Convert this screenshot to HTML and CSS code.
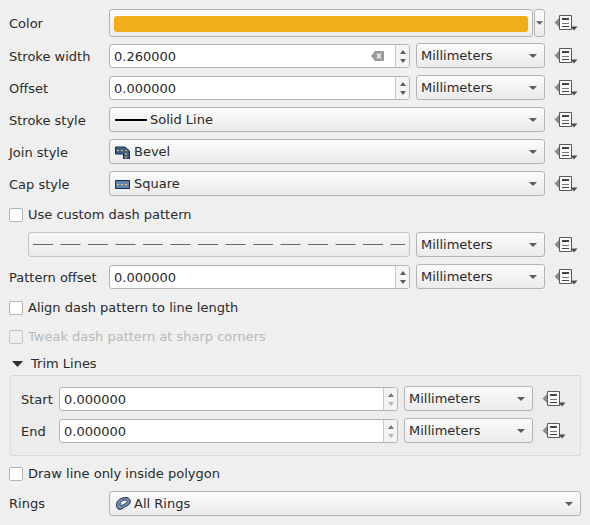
FILE: index.html
```html
<!DOCTYPE html>
<html lang="en">
<head>
<meta charset="utf-8">
<title>Line symbol settings</title>
<link rel="stylesheet" href="styles.css">
</head>
<body>
<svg class="defs" aria-hidden="true">
  <symbol id="dd" viewBox="0 0 24 16">
    <path d="M0.5 7.5 L5.5 2.5 V12.5 Z" fill="#8a8a8a"/>
    <path d="M5.5 0.5 H17.5 V14.5 H5.5 Z" fill="#fafafa" stroke="#5a5a5a" stroke-width="1"/>
    <path d="M8 3.5 H15 M8 4.5 H15" stroke="#444" stroke-width="1"/>
    <path d="M8 8.500 H15" stroke="#777" stroke-width="1"/>
    <path d="M8 11.500 H15" stroke="#444" stroke-width="1"/>
    <path d="M16.500 11.500 H23.500 L20 15.500 Z" fill="#4a4a4a"/>
  </symbol>
  <symbol id="arrow" viewBox="0 0 8 4">
    <path d="M0 0 H8 L4 4 Z" fill="#5c5c5c"/>
  </symbol>
</svg>
<main class="panel">
  <div class="row row-color">
    <span class="label">Color</span>
    <div class="color-btn"><div class="swatch"></div></div>
    <div class="color-drop"><svg class="arrow"><use href="#arrow"/></svg></div>
    <svg class="dd"><use href="#dd"/></svg>
  </div>
  <div class="row row-sw">
    <span class="label">Stroke width</span>
    <div class="spin">
      <span class="value">0.260000</span>
      <svg class="clear" viewBox="0 0 13 10"><path d="M0 5 L4 0 H13 V10 H4 Z" fill="#9a9a9a"/><path d="M6 2.5 L10 7.5 M10 2.5 L6 7.5" stroke="#f4f4f4" stroke-width="1.4"/></svg>
      <div class="steps"><i class="up"></i><i class="down"></i></div>
    </div>
    <div class="combo unit"><span class="txt">Millimeters</span><svg class="arrow"><use href="#arrow"/></svg></div>
    <svg class="dd"><use href="#dd"/></svg>
  </div>
  <div class="row row-off">
    <span class="label">Offset</span>
    <div class="spin">
      <span class="value">0.000000</span>
      <div class="steps"><i class="up"></i><i class="down"></i></div>
    </div>
    <div class="combo unit"><span class="txt">Millimeters</span><svg class="arrow"><use href="#arrow"/></svg></div>
    <svg class="dd"><use href="#dd"/></svg>
  </div>
  <div class="row row-style">
    <span class="label">Stroke style</span>
    <div class="combo wide"><span class="solid"></span><span class="txt">Solid Line</span><svg class="arrow"><use href="#arrow"/></svg></div>
    <svg class="dd"><use href="#dd"/></svg>
  </div>
  <div class="row row-style">
    <span class="label">Join style</span>
    <div class="combo wide">
      <svg class="ico" viewBox="0 0 15 14"><path d="M0.5 2 H10 L14.500 6 V14 H8.500 V9 H0.500 Z" fill="#3f5f8f" stroke="#1d2b44"/><path d="M2 5.500 H4 M6 5.500 H8 M10.500 5.500 H12 M11 8 V10 M11 11.500 V13.500" stroke="#e8d24a" stroke-width="1.200"/></svg>
      <span class="txt">Bevel</span><svg class="arrow"><use href="#arrow"/></svg>
    </div>
    <svg class="dd"><use href="#dd"/></svg>
  </div>
  <div class="row row-style">
    <span class="label">Cap style</span>
    <div class="combo wide">
      <svg class="ico" viewBox="0 0 15 14"><path d="M0.500 3.500 H14.500 V11.500 H0.500 Z" fill="#6484b0" stroke="#1d2b44"/><path d="M2 7.500 H4 M6 7.500 H8 M10 7.500 H12" stroke="#e8d24a" stroke-width="1.200"/></svg>
      <span class="txt">Square</span><svg class="arrow"><use href="#arrow"/></svg>
    </div>
    <svg class="dd"><use href="#dd"/></svg>
  </div>
  <label class="check check-dash"><span class="box"></span>Use custom dash pattern</label>
  <div class="row row-dash">
    <div class="dash-btn"><svg class="dash" viewBox="0 0 372 1"><line x1="0" y1="0.500" x2="372" y2="0.500" stroke="#666" stroke-width="1" stroke-dasharray="20 7.500"/></svg></div>
    <div class="combo unit"><span class="txt">Millimeters</span><svg class="arrow"><use href="#arrow"/></svg></div>
    <svg class="dd"><use href="#dd"/></svg>
  </div>
  <div class="row row-pat">
    <span class="label">Pattern offset</span>
    <div class="spin">
      <span class="value">0.000000</span>
      <div class="steps"><i class="up"></i><i class="down"></i></div>
    </div>
    <div class="combo unit"><span class="txt">Millimeters</span><svg class="arrow"><use href="#arrow"/></svg></div>
    <svg class="dd"><use href="#dd"/></svg>
  </div>
  <label class="check check-align"><span class="box"></span>Align dash pattern to line length</label>
  <label class="check check-tweak disabled"><span class="box"></span>Tweak dash pattern at sharp corners</label>
  <div class="trim-head"><svg class="tri" viewBox="0 0 11 6"><path d="M0 0 H11 L5.500 6 Z" fill="#2e2e2e"/></svg><span>Trim Lines</span></div>
  <section class="group">
    <div class="row">
      <span class="glabel">Start</span>
      <div class="spin spin-g">
        <span class="value">0.000000</span>
        <div class="steps steps-dim"><i class="up"></i><i class="down"></i></div>
      </div>
      <div class="combo unit"><span class="txt">Millimeters</span><svg class="arrow"><use href="#arrow"/></svg></div>
      <svg class="dd dd-g"><use href="#dd"/></svg>
    </div>
    <div class="row row-end">
      <span class="glabel">End</span>
      <div class="spin spin-g">
        <span class="value">0.000000</span>
        <div class="steps steps-dim"><i class="up"></i><i class="down"></i></div>
      </div>
      <div class="combo unit"><span class="txt">Millimeters</span><svg class="arrow"><use href="#arrow"/></svg></div>
      <svg class="dd dd-g"><use href="#dd"/></svg>
    </div>
  </section>
  <label class="check check-draw"><span class="box"></span>Draw line only inside polygon</label>
  <div class="row row-rings">
    <span class="label">Rings</span>
    <div class="combo rings">
      <svg class="ico ico-ring" viewBox="0 0 15 14"><path fill-rule="evenodd" d="M0.500 8 C0.500 3 5 0.500 10 0.500 C13 0.500 15 3 14 6 C13 9 9 9 7 11 C5 13.500 0.500 13 0.500 8 Z M4 7.500 C4 9.500 7 8 9.500 6.500 C12 5 11.500 3 9 3 C6.500 3 4 5 4 7.500 Z" fill="#6f8fb5" stroke="#26364f" stroke-width="1"/></svg>
      <span class="txt">All Rings</span><svg class="arrow"><use href="#arrow"/></svg>
    </div>
  </div>
</main>
</body>
</html>
```
FILE: styles.css
```css
* { box-sizing: border-box; }
html, body { margin: 0; padding: 0; }
body {
  width: 590px;
  height: 525px;
  overflow: hidden;
  background: #efefef;
  color: #2a2a2a;
  font-family: "DejaVu Sans", sans-serif;
  font-size: 13px;
  line-height: 16px;
}
.defs { display: none; }
.panel { padding: 9px 0 0 9px; }
.row { display: flex; align-items: flex-end; height: 25px; }
.label { width: 100px; flex: none; white-space: nowrap; line-height: 22px; }
.row-color { height: 28px; }
.row-color .label { margin-bottom: 2px; }
.row-sw { margin-top: 6px; }
.row-off { margin-top: 7px; }
.row-style { margin-top: 7px; }
.row-dash { margin-top: 9px; padding-left: 19px; }
.row-pat { margin-top: 7px; }
.row-rings { margin-top: 9px; }
.row-rings .label { margin-bottom: 1px; }

.color-btn {
  width: 424px; height: 28px; flex: none; padding: 6px 4px 5px 4px;
  border: 1px solid #b4b4b4; border-radius: 3px;
  background: linear-gradient(#fbfbfb, #ececec);
}
.swatch { height: 16px; background: #f1ae1a; border-radius: 3px; }
.color-drop {
  width: 11px; height: 28px; flex: none; margin-left: 1px;
  border: 1px solid #b4b4b4; border-radius: 3px;
  background: linear-gradient(#fbfbfb, #ececec);
  display: flex; align-items: center; justify-content: center;
}
.color-drop .arrow { margin: 0; width: 7px; height: 4px; }

.spin {
  width: 301px; height: 24px; flex: none;
  display: flex; align-items: center;
  background: #fff;
  border: 1px solid #b4b4b4; border-radius: 3px;
  padding-left: 4px;
}
.spin-g { width: 339px; }
.value { flex: 1; padding-top: 2px; }
.clear { width: 13px; height: 10px; margin-right: 11px; flex: none; }
.steps {
  width: 14px; height: 22px; flex: none;
  display: flex; flex-direction: column; align-items: center; justify-content: center; gap: 5px;
  border-left: 1px solid #c8c8c8;
  background: #f4f4f4;
  border-radius: 0 2px 2px 0;
}
.steps i { width: 0; height: 0; border-left: 3.5px solid transparent; border-right: 3.5px solid transparent; }
.up { border-bottom: 4px solid #5c5c5c; }
.down { border-top: 4px solid #5c5c5c; }
.steps-dim .down { border-top-color: #b4b4b4; }
.steps-dim .up { border-bottom-color: #777; }

.combo {
  height: 25px; flex: none;
  display: flex; align-items: center;
  padding: 0 7px 0 4px;
  border: 1px solid #b4b4b4; border-radius: 3px;
  background: linear-gradient(#fbfbfb, #ebebeb);
}
.combo .txt { flex: 1; white-space: nowrap; }
.unit { width: 129px; margin-left: 6px; }
.wide { width: 436px; padding-left: 5px; }
.rings { width: 472px; padding-left: 6px; }
.arrow { width: 8px; height: 4px; flex: none; }
.solid { width: 32px; height: 2px; background: #000; margin-right: 3px; flex: none; }
.ico { width: 15px; height: 14px; margin-right: 4px; flex: none; }
.ico-ring { margin-right: 3px; }

.dd { width: 24px; height: 16px; flex: none; margin: 0 0 4px 9px; }
.row-color .dd { margin-bottom: 6px; }

.check { display: flex; align-items: center; height: 16px; white-space: nowrap; }
.box {
  width: 14px; height: 14px; flex: none; margin-right: 5px;
  background: #fff; border: 1px solid #b4b4b4; border-radius: 2px;
}
.check-dash { margin-top: 11px; }
.check-align { margin-top: 11px; }
.check-tweak { margin-top: 13px; }
.check-draw { margin-top: 10px; }
.disabled { color: #b9b9b9; }
.disabled .box { background: #efefef; border-color: #c6c6c6; }

.dash-btn {
  width: 382px; height: 25px; flex: none;
  display: flex; align-items: center; padding-left: 4px;
  border: 1px solid #c4c4c4; border-radius: 3px;
  background: linear-gradient(#f6f6f6, #ebebeb);
}
.dash { width: 372px; height: 1px; flex: none; }

.trim-head { display: flex; align-items: center; height: 16px; margin-top: 11px; padding-left: 3px; }
.tri { width: 11px; height: 6px; margin-right: 8px; flex: none; }
.group {
  width: 571px; height: 81px; margin: 3px 0 0 1px;
  padding: 10px 0 0 10px;
  border: 1px solid #dadada; border-radius: 2px;
  background: #ececec;
}
.group .row-end { margin-top: 7px; }
.glabel { width: 38px; flex: none; line-height: 22px; }
```
